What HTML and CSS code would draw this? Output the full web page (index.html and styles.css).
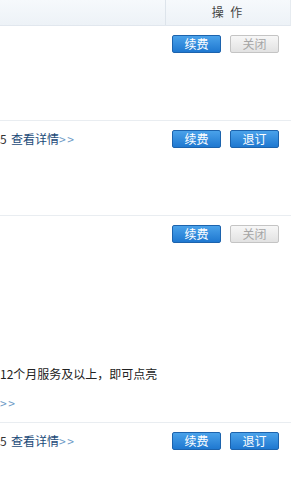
FILE: index.html
```html
<!DOCTYPE html>
<html lang="zh-CN">
<head>
    <meta charset="UTF-8">
    <title>服务列表</title>
    <link rel="stylesheet" href="styles.css">
</head>
<body>
    <div class="grid">
        <div class="head">
            <div class="info"></div>
            <div class="ops">操 作</div>
        </div>

        <div class="row r1">
            <div class="info"></div>
            <div class="ops">
                <button class="btn">续费</button>
                <button class="btn off">关闭</button>
            </div>
        </div>

        <div class="row r2">
            <div class="info">
                <span class="cut">5</span><a class="more" href="#">查看详情<em>&gt;&gt;</em></a>
            </div>
            <div class="ops">
                <button class="btn">续费</button>
                <button class="btn">退订</button>
            </div>
        </div>

        <div class="row r3">
            <div class="info">
                <p class="tip">12个月服务及以上，即可点亮</p>
                <p class="arrow">&gt;&gt;</p>
            </div>
            <div class="ops">
                <button class="btn">续费</button>
                <button class="btn off">关闭</button>
            </div>
        </div>

        <div class="row r4">
            <div class="info">
                <span class="cut">5</span><a class="more" href="#">查看详情<em>&gt;&gt;</em></a>
            </div>
            <div class="ops">
                <button class="btn">续费</button>
                <button class="btn">退订</button>
            </div>
        </div>
    </div>
</body>
</html>
```

FILE: styles.css
```css
* {
    margin: 0;
    padding: 0;
    box-sizing: border-box;
}

body {
    background: #fff;
    font-family: "Noto Sans CJK SC", "Noto Sans", sans-serif;
    font-size: 12px;
    color: #333;
    overflow: hidden;
}

.grid {
    width: 291px;
}

.head,
.row {
    display: flex;
    border-bottom: 1px solid #e9edf1;
}

.info {
    width: 165px;
    white-space: nowrap;
}

.ops {
    flex: 1;
    display: flex;
    gap: 9px;
    padding-left: 7px;
}

/* header */
.head {
    height: 26px;
    background: linear-gradient(#f6f9fc, #edf2f7);
    border-bottom-color: #e1e7ee;
    border-right: 1px solid #e6ebf0;
}

.head .ops {
    justify-content: center;
    align-items: center;
    padding: 0 0 2px 0;
    border-left: 1px solid #dde4eb;
    color: #444;
    letter-spacing: 2px;
}

/* rows */
.row {
    padding-top: 9px;
}

.r1 { height: 95px; }
.r2 { height: 95px; }
.r3 { height: 207px; }
.r4 { height: 40px; border-bottom: none; }

.row .info {
    line-height: 18px;
}

.cut {
    display: inline-block;
    width: 8px;
}

.more {
    color: #1b4a78;
    text-decoration: none;
    margin-left: 3px;
}

.more em,
.arrow {
    font-style: normal;
    color: #6d9ac6;
    letter-spacing: 1.5px;
}

.tip {
    margin-top: 140px;
    color: #222;
}

.arrow {
    margin-top: 11px;
}

/* buttons */
.btn {
    width: 49px;
    height: 18px;
    border: 1px solid #1c63ad;
    border-radius: 2px;
    background: linear-gradient(#4aa2ea, #1f78d0);
    color: #fff;
    font-family: inherit;
    font-size: 12px;
    line-height: 16px;
    cursor: pointer;
}

.btn.off {
    border-color: #c4c4c4;
    background: linear-gradient(#f7f7f7, #e2e2e2);
    color: #a6a6a6;
    cursor: default;
}
```
